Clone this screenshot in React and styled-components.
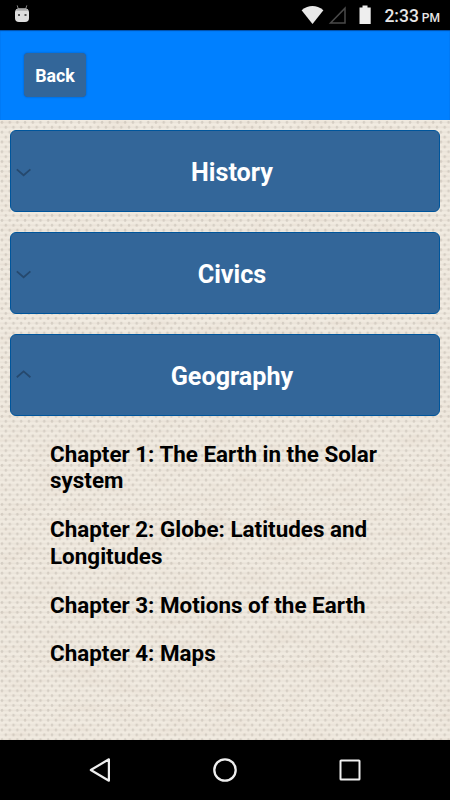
import React, { useState } from "react";
import styled, { createGlobalStyle } from "styled-components";

const GlobalStyle = createGlobalStyle`
  * {
    box-sizing: border-box;
  }

  body {
    margin: 0;
    background: #000000;
    font-family: Roboto, "Liberation Sans", sans-serif;
  }

  button {
    font-family: inherit;
    cursor: pointer;
  }
`;

const Screen = styled.div`
  display: flex;
  flex-direction: column;
  width: 450px;
  height: 800px;
  overflow: hidden;
`;

const StatusBar = styled.div`
  display: flex;
  align-items: center;
  justify-content: space-between;
  flex: none;
  height: 30px;
  padding: 0 10px 0 14px;
  background: #000000;
  color: #e6e6e6;
`;

const StatusIcons = styled.div`
  display: flex;
  align-items: center;
`;

const Clock = styled.span`
  display: flex;
  align-items: baseline;
  margin-left: 11px;
  font-size: 17.5px;
  font-weight: 500;
  line-height: 30px;
  padding-top: 3px;

  small {
    margin-left: 3px;
    font-size: 12px;
  }
`;

const Header = styled.header`
  flex: none;
  height: 90px;
  padding: 23px 24px;
  background: #0080ff;
  box-shadow: inset 0 1px 1px rgba(0, 30, 80, 0.5);
`;

const BackButton = styled.button`
  width: 62px;
  height: 44px;
  padding: 0;
  border: 0;
  border-radius: 4px;
  background: #336699;
  box-shadow: 0 0 2px rgba(0, 40, 100, 0.5);
  color: #ffffff;
  font-size: 17.8px;
  font-weight: 700;
`;

const Content = styled.main`
  position: relative;
  z-index: 0;
  flex: 1;
  padding: 10px;
`;

const FabricSvg = styled.svg`
  position: absolute;
  inset: 0;
  z-index: -1;
  width: 100%;
  height: 100%;
`;

const SubjectButton = styled.button`
  display: grid;
  grid-template-columns: 16px 1fr;
  align-items: center;
  width: 100%;
  height: 82px;
  margin-bottom: ${({ $open }) => ($open ? "25px" : "20px")};
  padding: 0 5px;
  border: 1px solid #00559b;
  border-radius: 6px;
  background: #336699;
  color: #ffffff;
  font-size: 25.2px;
  font-weight: 700;
  line-height: 30px;
  text-align: center;
`;

const SubjectName = styled.span`
  padding: 4px 2px 0 0;
`;

const ChapterList = styled.ul`
  margin: 0;
  padding: 0 40px;
  list-style: none;
`;

const Chapter = styled.li`
  margin-bottom: 22.5px;
  color: #000000;
  font-size: 22.42px;
  font-weight: 700;
  line-height: 26.37px;
`;

const NavBar = styled.nav`
  display: flex;
  align-items: center;
  justify-content: center;
  gap: 101px;
  flex: none;
  height: 60px;
  background: #000000;
`;

const subjects = [
  { name: "History", chapters: [] },
  { name: "Civics", chapters: [] },
  {
    name: "Geography",
    chapters: [
      "Chapter 1: The Earth in the Solar system",
      "Chapter 2: Globe: Latitudes and Longitudes",
      "Chapter 3: Motions of the Earth",
      "Chapter 4: Maps",
    ],
  },
];

function Fabric() {
  return (
    <FabricSvg aria-hidden="true">
      <defs>
        <pattern id="weave" width="7.7" height="9.8" patternUnits="userSpaceOnUse">
          <rect width="7.7" height="9.8" fill="#f1ebe1" />
          <path d="M0 2.3h7.7M0 7.2h7.7" stroke="#eae3d9" strokeWidth="1.8" />
          <ellipse cx="2" cy="2.3" rx="1.2" ry="1.5" fill="#d5cec4" />
          <ellipse cx="5.8" cy="7.2" rx="1.2" ry="1.5" fill="#d5cec4" />
        </pattern>
        {/* uneven threads */}
        <filter id="threads" x="0" y="0" width="100%" height="100%" colorInterpolationFilters="sRGB">
          <feTurbulence type="fractalNoise" baseFrequency="0.03 0.12" numOctaves="3" seed="4" />
          <feColorMatrix values="0 0 0 0 0.74  0 0 0 0 0.6  0 0 0 0 0.5  0.8 0 0 0 -0.34" />
        </filter>
      </defs>
      <rect width="100%" height="100%" fill="url(#weave)" />
      <rect width="100%" height="100%" filter="url(#threads)" opacity="0.2" />
    </FabricSvg>
  );
}

function Chevron({ up }) {
  return (
    <svg width="16" height="12" viewBox="0 0 16 12" fill="none" stroke="#26496e" strokeWidth="1.8">
      <path d={up ? "M.8 8.2 7.6 2.4 14.4 8.2" : "M.8 4.4 7.6 10.2 14.4 4.4"} />
    </svg>
  );
}

function AndroidHead() {
  return (
    <svg width="16" height="20" viewBox="0 0 16 20">
      <path d="M3.2 .4 4.3 4M12.8 .4 11.7 4" stroke="#858585" strokeWidth="1" />
      <path d="M1 7Q1.5 3.6 5 3.6h6q3.5 0 4 3.4v6q0 4-4 4H5q-4 0-4-4Z" fill="#dedede" />
      <path d="M2 5.7Q3 3.6 5 3.6h6q2 0 3 2.1Z" fill="#aaaaaa" />
      <path d="M4 9h2v2H4zM10.5 9h2v2h-2z" fill="#555555" />
    </svg>
  );
}

function App() {
  const [open, setOpen] = useState("Geography");

  return (
    <Screen>
      <GlobalStyle />
      <StatusBar>
        <AndroidHead />
        <StatusIcons>
          <svg width="72" height="22" viewBox="0 0 72 22">
            <path d="M.6 6.2Q11.5-2.1 22.4 6.2L11.5 20Z" fill="#e9e9e9" />
            <path d="M29.5 19.1H44V4.2Z" fill="none" stroke="#494949" strokeWidth="1.5" />
            <path d="M58.5 3.4h3V1.6h5v1.8h3.2V20H58.5Z" fill="#eeeeee" />
          </svg>
          <Clock>
            2:33 <small>PM</small>
          </Clock>
        </StatusIcons>
      </StatusBar>

      <Header>
        <BackButton>Back</BackButton>
      </Header>

      <Content>
        <Fabric />
        {subjects.map(({ name, chapters }) => (
          <React.Fragment key={name}>
            <SubjectButton $open={open === name} onClick={() => setOpen(open === name ? null : name)}>
              <Chevron up={open === name} />
              <SubjectName>{name}</SubjectName>
            </SubjectButton>
            {open === name && (
              <ChapterList>
                {chapters.map(chapter => (
                  <Chapter key={chapter}>{chapter}</Chapter>
                ))}
              </ChapterList>
            )}
          </React.Fragment>
        ))}
      </Content>

      <NavBar>
        <svg width="24" height="26" viewBox="0 0 24 26" fill="none" stroke="#eeeeee" strokeWidth="2.2">
          <path d="M20.9 2.3v21.4L2.8 13Z" strokeLinejoin="round" />
        </svg>
        <svg width="24" height="24" viewBox="0 0 24 24" fill="none" stroke="#eeeeee" strokeWidth="2.3">
          <circle cx="12" cy="12" r="10.7" />
        </svg>
        <svg width="24" height="24" viewBox="0 0 24 24" fill="none" stroke="#eeeeee" strokeWidth="2">
          <rect x="2.5" y="2.5" width="19" height="19" rx="0.6" />
        </svg>
      </NavBar>
    </Screen>
  );
}

export default App;
